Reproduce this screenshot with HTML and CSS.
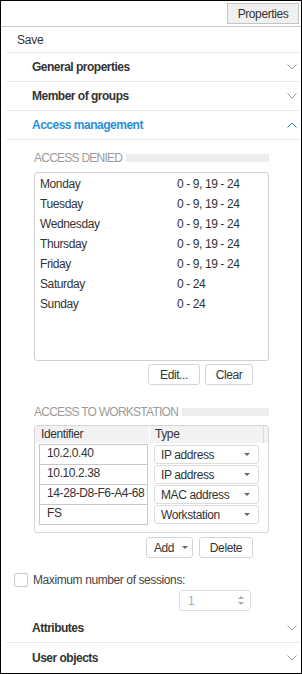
FILE: index.html
```html
<!DOCTYPE html>
<html>
<head>
<meta charset="utf-8">
<link rel="stylesheet" href="styles.css">
</head>
<body>
<div class="frame">
  <div class="toolbar"><button class="btn-prop">Properties</button></div>
  <div class="menu-row">Save</div>
  <div class="acc-head"><span>General properties</span><svg class="chev" width="10" height="6" viewBox="0 0 10 6"><path d="M0.5 0.5 L5 5 L9.5 0.5" fill="none" stroke="#9a9a9a" stroke-width="1"/></svg></div>
  <div class="acc-head"><span>Member of groups</span><svg class="chev" width="10" height="6" viewBox="0 0 10 6"><path d="M0.5 0.5 L5 5 L9.5 0.5" fill="none" stroke="#9a9a9a" stroke-width="1"/></svg></div>
  <div class="acc-head open"><span>Access management</span><svg class="chev" width="10" height="6" viewBox="0 0 10 6"><path d="M0.5 5.5 L5 1 L9.5 5.5" fill="none" stroke="#2b8fd8" stroke-width="1"/></svg></div>
  <div class="acc-body">
    <div class="sec-title"><span>ACCESS DENIED</span><i class="sec-bar"></i></div>
    <div class="days">
      <span>Monday</span><span>0 - 9, 19 - 24</span>
      <span>Tuesday</span><span>0 - 9, 19 - 24</span>
      <span>Wednesday</span><span>0 - 9, 19 - 24</span>
      <span>Thursday</span><span>0 - 9, 19 - 24</span>
      <span>Friday</span><span>0 - 9, 19 - 24</span>
      <span>Saturday</span><span>0 - 24</span>
      <span>Sunday</span><span>0 - 24</span>
    </div>
    <div class="btn-row">
      <button class="btn w-edit">Edit...</button>
      <button class="btn w-clear">Clear</button>
    </div>
    <div class="sec-title second"><span>ACCESS TO WORKSTATION</span><i class="sec-bar"></i></div>
    <div class="ws">
      <div class="ws-head">
        <span class="h-id">Identifier</span>
        <span class="h-type">Type</span>
        <span class="h-end"></span>
      </div>
      <div class="ws-body">
        <div class="ids">
          <div class="id-cell">10.2.0.40</div>
          <div class="id-cell">10.10.2.38</div>
          <div class="id-cell">14-28-D8-F6-A4-68</div>
          <div class="id-cell">FS</div>
        </div>
        <div class="types">
          <div class="sel"><span>IP address</span><i class="caret"></i></div>
          <div class="sel"><span>IP address</span><i class="caret"></i></div>
          <div class="sel"><span>MAC address</span><i class="caret"></i></div>
          <div class="sel"><span>Workstation</span><i class="caret"></i></div>
        </div>
      </div>
    </div>
    <div class="btn-row second">
      <button class="btn w-add"><span>Add</span><i class="caret"></i></button>
      <button class="btn w-del">Delete</button>
    </div>
  </div>
  <div class="check-row"><span class="checkbox"></span><span class="check-label">Maximum number of sessions:</span></div>
  <div class="spin-row">
    <div class="spinner"><span>1</span><span class="spin-arrows"><i class="up"></i><i class="down"></i></span></div>
  </div>
  <div class="acc-head"><span>Attributes</span><svg class="chev" width="10" height="6" viewBox="0 0 10 6"><path d="M0.5 0.5 L5 5 L9.5 0.5" fill="none" stroke="#9a9a9a" stroke-width="1"/></svg></div>
  <div class="acc-head last"><span>User objects</span><svg class="chev" width="10" height="6" viewBox="0 0 10 6"><path d="M0.5 0.5 L5 5 L9.5 0.5" fill="none" stroke="#9a9a9a" stroke-width="1"/></svg></div>
</div>
</body>
</html>
```

FILE: styles.css
```css
* { box-sizing: border-box; }
html, body { margin: 0; padding: 0; background: #fff; }
body {
  font-family: "Liberation Sans", Arial, sans-serif;
  font-size: 11px;
  color: #333;
}
.frame {
  width: 302px;
  height: 674px;
  border: 1px solid #000;
  overflow: hidden;
  display: flex;
  flex-direction: column;
}
.toolbar {
  height: 26px;
  border-bottom: 1px solid #c8c8c8;
  display: flex;
  justify-content: flex-end;
  align-items: flex-start;
  padding: 2px 2px 0 0;
}
.btn-prop {
  font: inherit;
  font-size: 12px;
  color: #333;
  width: 72px;
  height: 21px;
  padding: 0;
  background: #f0f0f0;
  border: 1px solid #c4c4c4;
  border-radius: 0;
  letter-spacing: -0.4px;
}
.menu-row {
  height: 26px;
  margin-left: 5px;
  padding-left: 11px;
  display: flex;
  align-items: center;
  border-bottom: 1px solid #ebebeb;
  padding-top: 1px;
  font-size: 12px;
  letter-spacing: -0.2px;
}
.acc-head {
  height: 29px;
  margin-left: 5px;
  padding-left: 26px;
  padding-right: 4px;
  display: flex;
  align-items: center;
  justify-content: space-between;
  border-bottom: 1px solid #ebebeb;
  font-weight: bold;
  color: #333;
  flex-shrink: 0;
  font-size: 12px;
  letter-spacing: -0.5px;
}
.acc-head.open { color: #2b8fd8; }
.acc-head.last { border-bottom: none; }
.chev { display: block; }
.acc-body {
  padding: 11px 32px 0 33px;
  flex-shrink: 0;
}
.sec-title {
  height: 14px;
  display: flex;
  align-items: center;
  color: #9b9b9b;
  gap: 4px;
  line-height: 14px;
  font-size: 12px;
  letter-spacing: -0.75px;
}
.sec-title.second { margin-top: 20px; }
.sec-bar {
  flex: 1;
  height: 8px;
  background: #ededed;
}
.days {
  margin-top: 7px;
  height: 189px;
  border: 1px solid #cfcfcf;
  border-radius: 3px;
  padding: 1px 5px 0 5px;
  display: grid;
  grid-template-columns: 137px auto;
  grid-auto-rows: 20px;
  align-items: center;
  align-content: start;
  font-size: 12px;
  letter-spacing: -0.4px;
}
.btn-row {
  margin-top: 3px;
  display: flex;
  justify-content: flex-end;
  gap: 5px;
  padding-right: 16px;
}
.btn-row.second { margin-top: 4px; gap: 6px; }
.btn {
  font: inherit;
  font-size: 12px;
  letter-spacing: -0.4px;
  color: #333;
  height: 21px;
  padding: 0;
  background: #fff;
  border: 1px solid #d4d4d4;
  border-radius: 3px;
  display: flex;
  align-items: center;
  justify-content: center;
}
.w-edit { width: 52px; }
.w-clear { width: 48px; }
.w-add { width: 47px; gap: 8px; padding-left: 3px; }
.w-del { width: 54px; }
.ws {
  margin-top: 6px;
  height: 108px;
  border: 1px solid #d4d4d4;
  border-radius: 3px;
  font-size: 12px;
  letter-spacing: -0.4px;
}
.ws-head {
  height: 17px;
  display: flex;
  background: #f2f2f2;
  line-height: 17px;
  border-radius: 2px 2px 0 0;
}
.h-id { width: 115px; padding-left: 6px; border-right: 1px solid #fff; }
.h-type { width: 114px; padding-left: 5px; border-right: 1px solid #dcdcdc; }
.h-end { flex: 1; }
.ws-body {
  display: flex;
  padding: 1px 0 0 4px;
  gap: 6px;
}
.ids {
  width: 109px;
}
.id-cell {
  height: 20px;
  border: 1px solid #c8c8c8;
  border-bottom: none;
  padding-left: 7px;
  line-height: 16px;
  white-space: nowrap;
  overflow: hidden;
}
.id-cell:last-child { height: 21px; border-bottom: 1px solid #c8c8c8; }
.types {
  width: 105px;
  padding-top: 1px;
  display: flex;
  flex-direction: column;
  gap: 1px;
}
.sel {
  height: 19px;
  border: 1px solid #dcdcdc;
  border-radius: 3px;
  display: flex;
  align-items: center;
  justify-content: space-between;
  padding: 0 8px 0 6px;
  white-space: nowrap;
}
.caret {
  width: 0;
  height: 0;
  border-left: 3.5px solid transparent;
  border-right: 3.5px solid transparent;
  border-top: 3.5px solid #666;
  display: block;
}
.check-row {
  margin-top: 15px;
  height: 14px;
  display: flex;
  align-items: center;
  padding-left: 13px;
  flex-shrink: 0;
  font-size: 12px;
  letter-spacing: -0.4px;
}
.checkbox {
  width: 14px;
  height: 14px;
  border: 1px solid #c8c8c8;
  border-radius: 2px;
  display: block;
}
.check-label { margin-left: 5px; color: #444; }
.spin-row {
  margin-top: 3px;
  display: flex;
  padding-left: 178px;
  flex-shrink: 0;
}
.spinner {
  width: 72px;
  height: 21px;
  border: 1px solid #dedede;
  border-radius: 3px;
  display: flex;
  align-items: center;
  justify-content: space-between;
  padding: 0 6px 0 8px;
  color: #aaa;
  font-size: 12px;
}
.spin-arrows {
  display: flex;
  flex-direction: column;
  gap: 3px;
}
.spin-arrows i {
  width: 0;
  height: 0;
  border-left: 3px solid transparent;
  border-right: 3px solid transparent;
  display: block;
}
.spin-arrows .up { border-bottom: 3px solid #aaa; }
.spin-arrows .down { border-top: 3px solid #aaa; }
.spin-row + .acc-head { margin-top: 3px; }
```
